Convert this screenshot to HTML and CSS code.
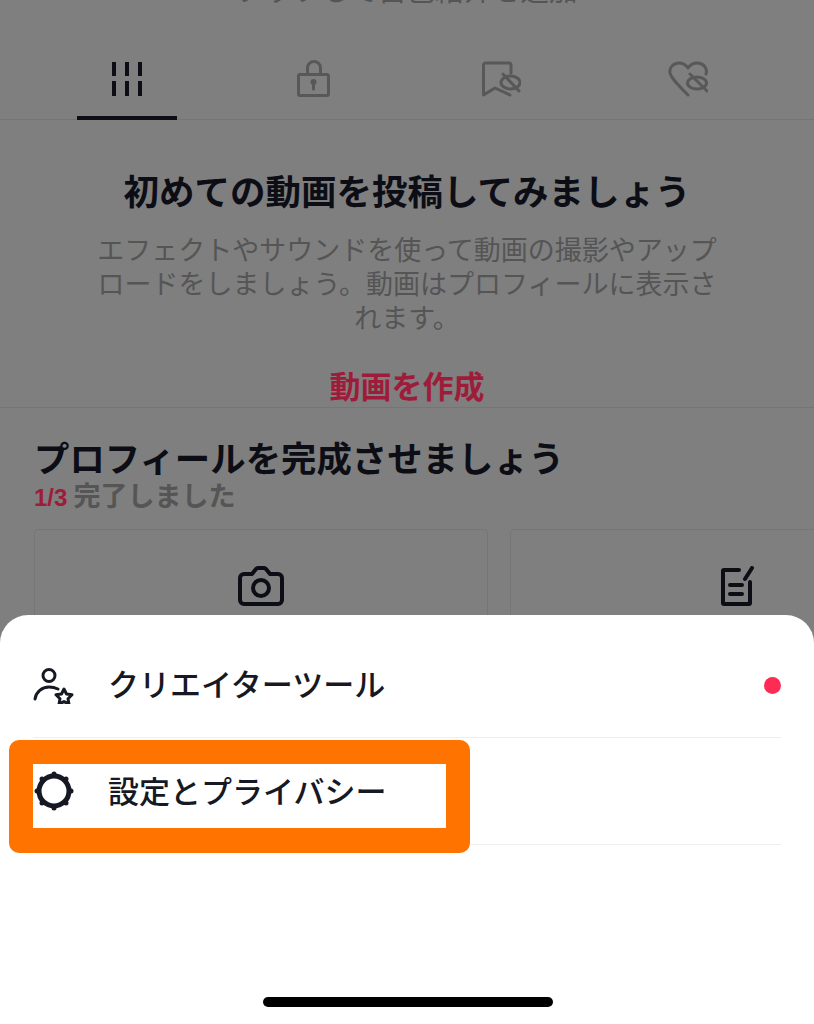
FILE: index.html
```html
<!DOCTYPE html>
<html lang="ja">
<head>
    <meta charset="UTF-8">
    <meta name="viewport" content="width=device-width, initial-scale=1.0">
    <title>設定とプライバシー</title>
    <link rel="stylesheet" href="styles.css">
</head>
<body>
    <div class="page">
        <div class="bio-link">タップして自己紹介を追加</div>

        <div class="tabs">
            <div class="tab tab-active">
                <svg class="tab-icon" viewBox="0 0 40 40" fill="none" stroke="currentColor" stroke-width="4">
                    <path d="M7 2v14M20 2v14M33 2v14M7 21v15M20 21v15M33 21v15"/>
                </svg>
            </div>
            <div class="tab">
                <svg class="tab-icon" viewBox="0 0 40 40" fill="none" stroke="currentColor" stroke-width="3" stroke-linejoin="round">
                    <rect x="4.500" y="14.500" width="30" height="21" rx="1.500"/>
                    <path d="M13.500 14V8a6.500 6.500 0 0 1 13 0v6"/>
                    <circle cx="19.500" cy="22" r="3" fill="currentColor" stroke="none"/>
                    <path d="M19.500 22v7" stroke-linecap="round"/>
                </svg>
            </div>
            <div class="tab">
                <svg class="tab-icon" viewBox="0 0 40 40" fill="none" stroke="currentColor" stroke-width="3" stroke-linecap="round" stroke-linejoin="round">
                    <path d="M30 13V5a2 2 0 0 0-2-2H4.500a2 2 0 0 0-2 2v30L14 28l15 7"/>
                    <ellipse cx="29.500" cy="22.500" rx="9.500" ry="6.500"/>
                    <path d="M22 14l16 17"/>
                </svg>
            </div>
            <div class="tab">
                <svg class="tab-icon" viewBox="0 0 40 40" fill="none" stroke="currentColor" stroke-width="3" stroke-linecap="round" stroke-linejoin="round">
                    <path d="M38 14C40 8 35 3 29 3c-4 0-7 2-9 5-2-3-5-5-9-5C5 3 1 8 2 13c1 4 4 8 18 22"/>
                    <ellipse cx="29" cy="23" rx="9.500" ry="6"/>
                    <path d="M22 14l17 17"/>
                </svg>
            </div>
        </div>

        <div class="empty">
            <h2 class="empty-title">初めての動画を投稿してみましょう</h2>
            <p class="empty-text">エフェクトやサウンドを使って動画の撮影やアップロードをしましょう。動画はプロフィールに表示されます。</p>
            <div class="empty-action">動画を作成</div>
        </div>

        <div class="complete">
            <h2 class="complete-title">プロフィールを完成させましょう</h2>
            <div class="complete-count"><span class="count-num">1/3</span> 完了しました</div>
            <div class="cards">
                <div class="card">
                    <svg class="card-icon" viewBox="0 0 46 40" fill="none" stroke="currentColor" stroke-width="4" stroke-linejoin="round">
                        <path d="M6 8h8l4-5a3 3 0 0 1 2-1h6a3 3 0 0 1 2 1l4 5h8a4 4 0 0 1 4 4v22a4 4 0 0 1-4 4H6a4 4 0 0 1-4-4V12a4 4 0 0 1 4-4z"/>
                        <circle cx="23" cy="22" r="8"/>
                    </svg>
                </div>
                <div class="card">
                    <svg class="card-icon" viewBox="0 0 46 40" fill="none" stroke="currentColor" stroke-width="4" stroke-linecap="round" stroke-linejoin="round">
                        <path d="M25 4H10a1 1 0 0 0-1 1v32a1 1 0 0 0 1 1h25a1 1 0 0 0 1-1V16"/>
                        <path d="M31 13l7-11M16 19h12M16 28h12"/>
                    </svg>
                </div>
            </div>
        </div>

        <div class="sheet">
            <div class="menu-row">
                <svg class="menu-icon" viewBox="0 0 42 40" fill="none" stroke="currentColor" stroke-width="3" stroke-linecap="round" stroke-linejoin="round">
                    <circle cx="16" cy="11.500" r="6"/>
                    <path d="M2 35c1-7 7-12 14-12 3 0 6 .6 9 2"/>
                    <path d="M31 25l2.500 5 5.500.8-4 3.900 1 5.500-5-2.600-5 2.600 1-5.500-4-3.900 5.500-.8z"/>
                </svg>
                <span class="menu-label">クリエイターツール</span>
                <span class="menu-dot"></span>
            </div>
            <div class="menu-row">
                <svg class="menu-icon" viewBox="0 0 40 40" fill="none" stroke="currentColor">
                    <circle cx="20" cy="20" r="15" stroke-width="5"/>
                    <g fill="currentColor" stroke="none">
                        <circle cx="20" cy="3" r="2.500"/>
                        <circle cx="32" cy="8" r="2.500"/>
                        <circle cx="37" cy="20" r="2.500"/>
                        <circle cx="32" cy="32" r="2.500"/>
                        <circle cx="20" cy="37" r="2.500"/>
                        <circle cx="8" cy="32" r="2.500"/>
                        <circle cx="3" cy="20" r="2.500"/>
                        <circle cx="8" cy="8" r="2.500"/>
                    </g>
                </svg>
                <span class="menu-label">設定とプライバシー</span>
            </div>
            <div class="home-bar"></div>
        </div>

        <div class="highlight"></div>
    </div>
</body>
</html>
```

FILE: styles.css
```css
body {
    margin: 0;
    font-family: "Noto Sans CJK JP", "Noto Sans", sans-serif;
    color: #0d0e15;
    background: #7f7f7f;
}
.page {
    position: relative;
    width: 814px;
    height: 1024px;
    overflow: hidden;
}
.bio-link {
    height: 4px;
    line-height: 4px;
    text-align: center;
    font-size: 28.500px;
    color: #555;
    margin-top: -13px;
    margin-bottom: 13px;
}
.tabs {
    display: flex;
    height: 115px;
    padding: 0 33px;
    border-bottom: 1px solid #757575;
    color: #585858;
}
.tab {
    flex: 1;
    display: flex;
    justify-content: center;
    align-items: flex-start;
    padding-top: 56px;
    margin-bottom: -1px;
}
.tab-active {
    color: #0d0e15;
    flex: none;
    width: 100px;
    margin: 0 44px -1px;
    border-bottom: 4px solid #0d0e15;
}
.tab-icon {
    width: 40px;
    height: 40px;
}
.empty {
    height: 287px;
    border-bottom: 1px solid #757575;
    text-align: center;
}
.empty-title {
    margin: 0;
    padding-top: 44px;
    font-size: 35.500px;
    line-height: 52px;
    font-weight: 700;
}
.empty-text {
    width: 630px;
    margin: 16px auto 0;
    font-size: 27px;
    line-height: 34px;
    color: #555;
}
.empty-action {
    margin-top: 28px;
    font-size: 31px;
    line-height: 46px;
    font-weight: 700;
    color: #9e1c3a;
}
.complete {
    padding: 27px 0 0 34px;
}
.complete-title {
    margin: 0;
    font-size: 35.400px;
    line-height: 44px;
    font-weight: 700;
}
.complete-count {
    height: 32px;
    font-size: 27px;
    line-height: 32px;
    font-weight: 700;
    color: #555;
}
.count-num {
    color: #9e1c3a;
    font-family: "Liberation Sans", sans-serif;
    font-size: 24px;
}
.cards {
    display: flex;
    gap: 22px;
    margin-top: 18px;
}
.card {
    flex: none;
    width: 454px;
    height: 200px;
    border: 1px solid #767676;
    border-radius: 4px;
    display: flex;
    justify-content: center;
    padding-top: 36px;
    box-sizing: border-box;
}
.card-icon {
    width: 46px;
    height: 40px;
}
.sheet {
    position: absolute;
    left: 0;
    right: 0;
    top: 615px;
    bottom: 0;
    color: #161823;
    background: #ffffff;
    border-radius: 28px 28px 0 0;
    padding: 16px 33px 0 33px;
}
.menu-row {
    display: flex;
    align-items: center;
    height: 106px;
    border-bottom: 1px solid #eee;
}
.menu-icon {
    flex: none;
    width: 42px;
    height: 40px;
    margin-right: 33px;
}
.menu-label {
    font-size: 31px;
    font-weight: 500;
    padding-bottom: 3px;
}
.menu-dot {
    width: 17px;
    height: 17px;
    border-radius: 50%;
    background: #fe2c55;
    margin-left: auto;
    margin-top: 2px;
}
.home-bar {
    position: absolute;
    left: 263px;
    bottom: 17px;
    width: 290px;
    height: 10px;
    border-radius: 5px;
    background: #000;
}
.highlight {
    position: absolute;
    left: 9px;
    top: 740px;
    width: 413px;
    height: 64px;
    border: solid #ff7300;
    border-width: 24px 24px 25px;
    border-radius: 10px;
}
```
